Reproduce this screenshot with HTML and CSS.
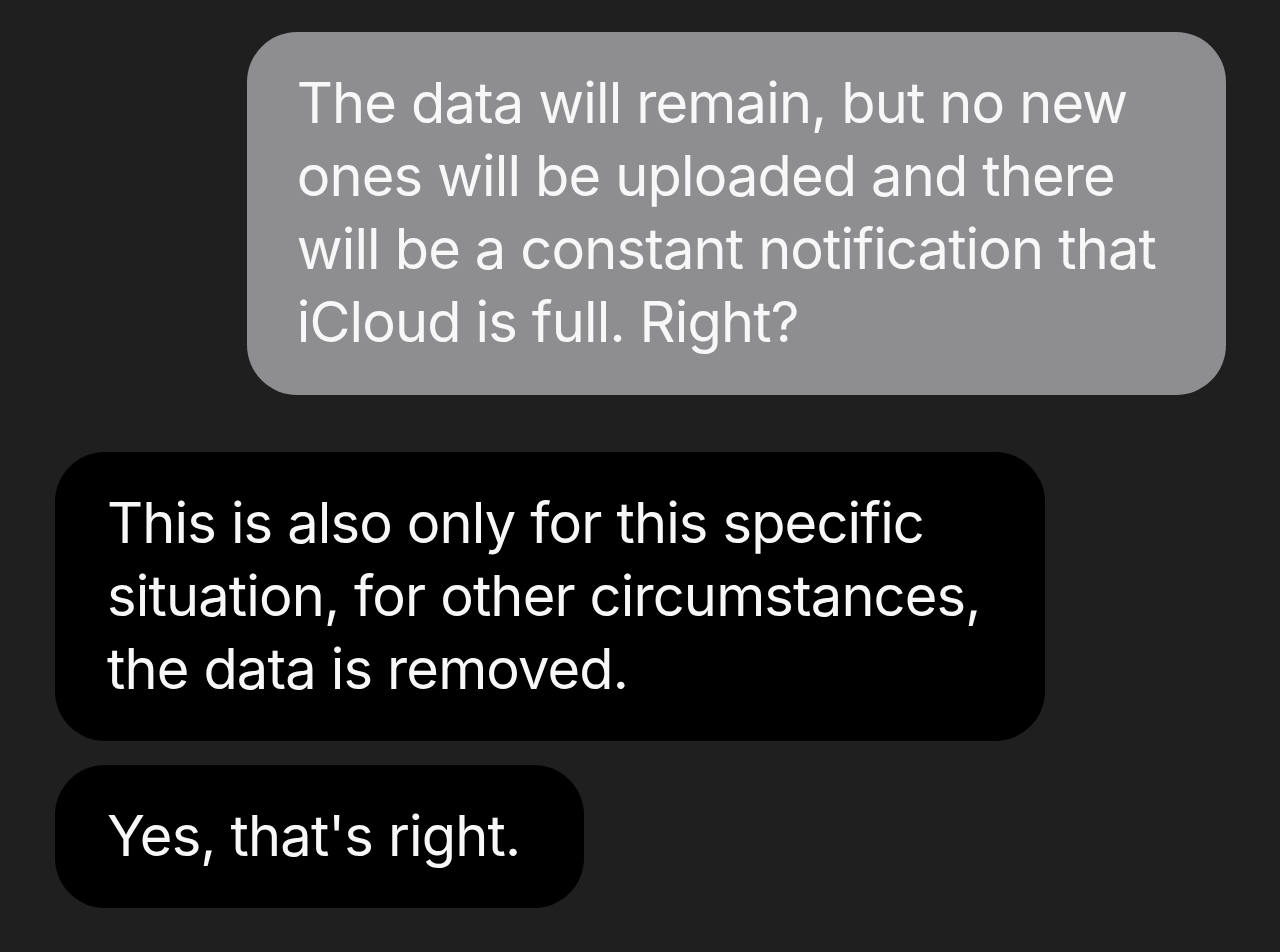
FILE: index.html
```html
<!DOCTYPE html>
<html lang="en">
<head>
  <meta charset="UTF-8" />
  <meta name="viewport" content="width=device-width, initial-scale=1.0"/>
  <title>Messages</title>
  <link rel="stylesheet" href="styles.css">
</head>
<body>

  <div class="thread">
    <div class="bubble sent">
      The data will remain, but no new<br>
      ones will be uploaded and there<br>
      will be a constant notification that<br>
      iCloud is full. Right?
    </div>

    <div class="group">
      <div class="bubble received">
        This is also only for this specific<br>
        situation, for other circumstances,<br>
        the data is removed.
      </div>
      <div class="bubble received">
        Yes, that's right.
      </div>
    </div>
  </div>

</body>
</html>
```

FILE: styles.css
```css
* {
  box-sizing: border-box;
}

body {
  margin: 0;
  background: #1f1f1f;
  font-family: Inter, "Noto Sans", sans-serif;
  height: 100vh;
  overflow: hidden;
}

.thread {
  display: flex;
  flex-direction: column;
  gap: 57px;
  padding: 32px 54px 0 55px;
}

.group {
  display: flex;
  flex-direction: column;
  align-items: flex-start;
  gap: 24px;
}

.bubble {
  width: fit-content;
  padding: 35px 64px 35px 52px;
  border-radius: 50px;
  color: #f7f7f7;
  font-size: 56px;
  line-height: 73px;
  letter-spacing: -0.85px;
  white-space: nowrap;
}

.sent {
  align-self: flex-end;
  background: #8e8e91;
  padding: 35px 70px 36px 50px;
}

.received {
  background: #000;
}
```
